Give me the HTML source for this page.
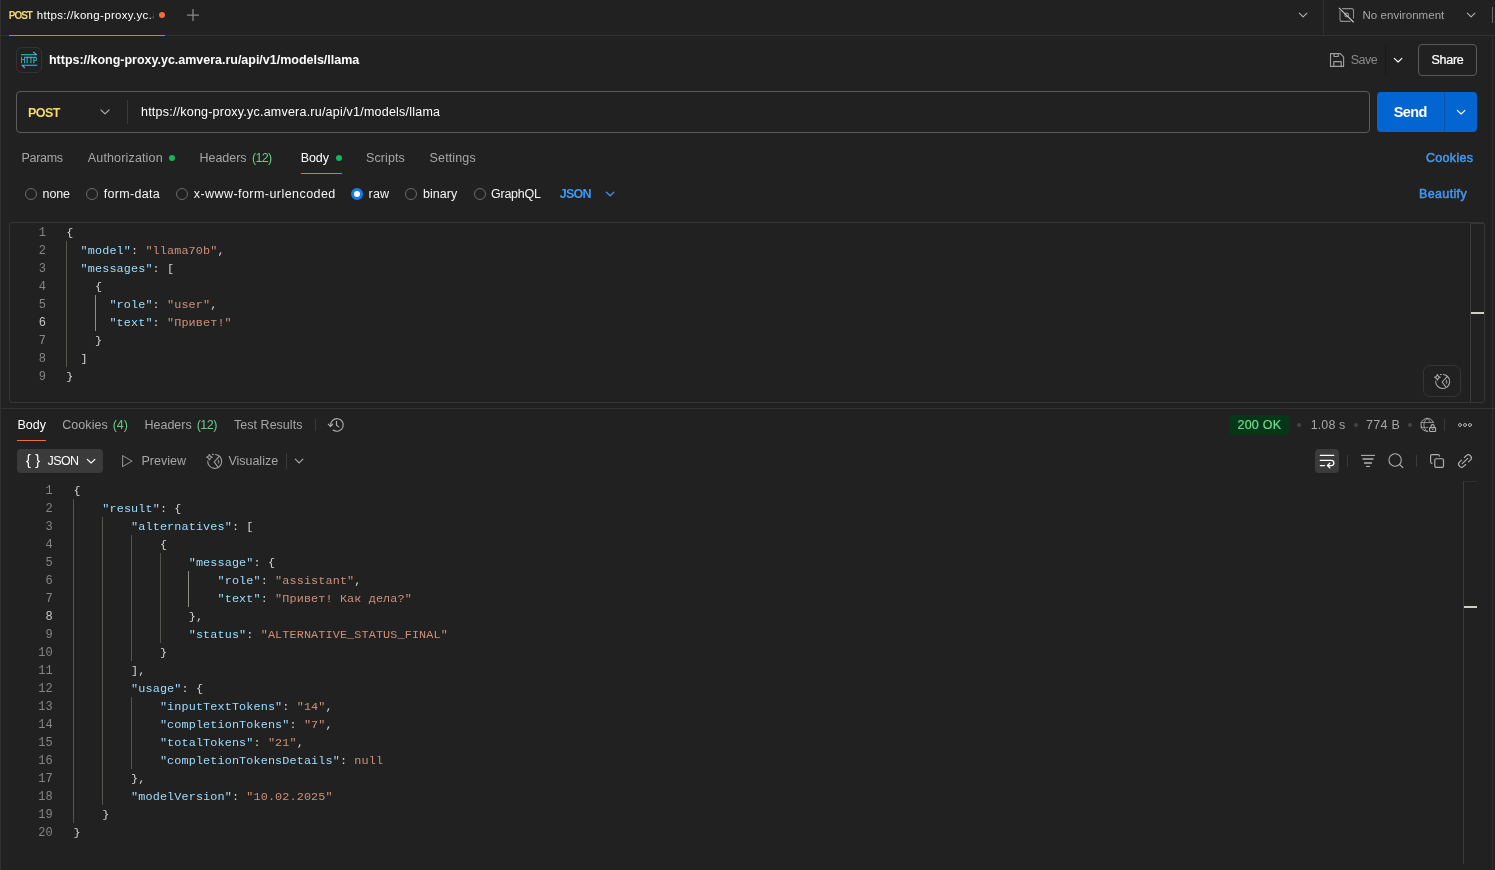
<!DOCTYPE html>
<html lang="en"><head><meta charset="utf-8"><title>Postman</title>
<style>
html,body{margin:0;padding:0;background:#212121;}
#app{position:relative;width:1495px;height:870px;overflow:hidden;background:#212121;font-family:'Liberation Sans',sans-serif;}
#app span{position:absolute;white-space:pre;line-height:16px;height:16px;}
#app .b{position:absolute;box-sizing:border-box;}
#app svg{position:absolute;overflow:visible;}
.ln,.cl{position:absolute;height:18px;line-height:18px;font-family:'Liberation Mono',monospace;font-size:12px;white-space:pre;}
.cl{font-size:11.8px;letter-spacing:0.12px;}
.ln{text-align:right;color:#858585;}
.ln.a{color:#c6c6c6;}
.cl i{font-style:normal;}
.k{color:#9cdcfe}.s{color:#ce9178}.p{color:#d4d4d4}
.g{position:absolute;width:1px;}
.tabtitle{-webkit-mask-image:linear-gradient(90deg,#000 0,#000 113px,transparent 117.5px);mask-image:linear-gradient(90deg,#000 0,#000 113px,transparent 117.5px);}
#txt{position:absolute;left:0;top:0;width:1495px;height:870px;will-change:transform;}

</style></head>
<body>
<div id="app">
<!-- left strip / right strip -->
<div class="b" style="left:0;top:0;width:1px;height:870px;background:#303030"></div>
<div class="b" style="left:1492px;top:36px;width:1px;height:834px;background:#2e2e2e"></div>
<!-- tab bar -->
<div class="b" style="left:1px;top:35px;width:1494px;height:1px;background:#303030"></div>
<div class="b" style="left:9px;top:35px;width:156px;height:1px;background:#f26b3a"></div>
<div class="b" style="left:158.7px;top:11.7px;width:6.6px;height:6.6px;border-radius:50%;background:#f26b3a"></div>
<div class="b" style="left:1323px;top:0;width:1px;height:35px;background:#303030"></div>
<div class="b" style="left:1492px;top:7px;width:1px;height:16px;background:#6b6b6b"></div>
<!-- title row -->
<div class="b" style="left:16px;top:47px;width:26px;height:26px;border:1px solid #333;border-radius:6px"></div>
<div class="b" style="left:1385px;top:44px;width:1px;height:32px;background:#1a1a1a"></div>
<div class="b" style="left:1418px;top:44px;width:59px;height:32px;border:1px solid #5a5a5a;border-radius:4px"></div>
<!-- url row -->
<div class="b" style="left:16px;top:91px;width:1354px;height:42px;border:1px solid #5c5c5c;border-radius:4px"></div>
<div class="b" style="left:127px;top:100px;width:1px;height:24px;background:#3a3a3a"></div>
<div class="b" style="left:1377px;top:92px;width:100px;height:40px;border-radius:4px;background:#0265d2"></div>
<div class="b" style="left:1444px;top:92px;width:1px;height:40px;background:#0552a8"></div>
<!-- request tabs -->
<div class="b" style="left:169px;top:155px;width:6px;height:6px;border-radius:50%;background:#12b851"></div>
<div class="b" style="left:336px;top:155px;width:6px;height:6px;border-radius:50%;background:#12b851"></div>
<div class="b" style="left:301px;top:173px;width:41px;height:1px;background:#f26b3a"></div>
<!-- radios -->
<div class="b" style="left:25px;top:188px;width:12px;height:12px;border:1px solid #6b6b6b;border-radius:50%"></div>
<div class="b" style="left:86px;top:188px;width:12px;height:12px;border:1px solid #6b6b6b;border-radius:50%"></div>
<div class="b" style="left:176px;top:188px;width:12px;height:12px;border:1px solid #6b6b6b;border-radius:50%"></div>
<div class="b" style="left:351px;top:188px;width:12px;height:12px;border:3.5px solid #0f7df0;border-radius:50%;background:#fff"></div>
<div class="b" style="left:405px;top:188px;width:12px;height:12px;border:1px solid #6b6b6b;border-radius:50%"></div>
<div class="b" style="left:474px;top:188px;width:12px;height:12px;border:1px solid #6b6b6b;border-radius:50%"></div>
<!-- request editor -->
<div class="b" style="left:9px;top:222px;width:1476px;height:181px;border:1px solid #353535;border-radius:3px"></div>
<div class="b" style="left:1470px;top:223px;width:1px;height:179px;background:#3c3c3c"></div>
<div class="b" style="left:1471px;top:223px;width:13px;height:1px;background:#353535"></div>
<div class="b" style="left:1471px;top:312px;width:13px;height:2px;background:#cfcfc4"></div>
<div class="b" style="left:1423px;top:365px;width:38px;height:32px;border:1px solid #353535;border-radius:7px"></div>
<!-- pane separator -->
<div class="b" style="left:1px;top:408px;width:1494px;height:1px;background:#333333"></div>
<!-- response tabs -->
<div class="b" style="left:17px;top:440px;width:29px;height:1px;background:#f26b3a"></div>
<div class="b" style="left:315px;top:419px;width:1px;height:12px;background:#3a3a3a"></div>
<div class="b" style="left:1229px;top:415px;width:60px;height:20px;border-radius:4px;background:#053618"></div>
<div class="b" style="left:1297px;top:423px;width:4px;height:4px;border-radius:50%;background:#454545"></div>
<div class="b" style="left:1354px;top:423px;width:4px;height:4px;border-radius:50%;background:#454545"></div>
<div class="b" style="left:1408px;top:423px;width:4px;height:4px;border-radius:50%;background:#454545"></div>
<div class="b" style="left:1444px;top:419px;width:1px;height:12px;background:#3a3a3a"></div>
<!-- response toolbar -->
<div class="b" style="left:17px;top:449px;width:86px;height:24px;border-radius:4px;background:#3b3b3b"></div>
<div class="b" style="left:286px;top:453px;width:1px;height:16px;background:#3a3a3a"></div>
<div class="b" style="left:1315px;top:449px;width:24px;height:24px;border-radius:4px;background:#3b3b3b"></div>
<div class="b" style="left:1347px;top:455px;width:1px;height:12px;background:#3a3a3a"></div>
<div class="b" style="left:1416px;top:455px;width:1px;height:12px;background:#3a3a3a"></div>
<!-- response overview ruler -->
<div class="b" style="left:1463px;top:481px;width:14px;height:383px;border-left:1px solid #3a3a3a;border-top:1px solid #2f2f2f"></div>
<div class="b" style="left:1464px;top:606px;width:13px;height:2px;background:#cfcfc4"></div>

<div id="txt">
<span style="left:8.7px;top:7.54px;font-size:10px;font-weight:700;color:#f5d971;letter-spacing:-0.978px">POST</span>
<span class="tabtitle" style="left:36.8px;top:7.02px;font-size:11.5px;font-weight:400;color:#ffffff;letter-spacing:0.316px">https://kong-proxy.yc.a</span>
<span style="left:1362.5px;top:7.02px;font-size:11.5px;font-weight:400;color:#a6a6a6;letter-spacing:0.047px">No environment</span>
<span style="left:49.0px;top:51.67px;font-size:12.5px;font-weight:700;color:#ffffff;letter-spacing:-0.016px">https://kong-proxy.yc.amvera.ru/api/v1/models/llama</span>
<span style="left:1350.7px;top:51.67px;font-size:12.5px;font-weight:400;color:#8a8a8a;letter-spacing:-0.467px">Save</span>
<span style="left:1431.4px;top:51.67px;font-size:12.5px;font-weight:400;color:#ffffff;-webkit-text-stroke:0.22px #ffffff;letter-spacing:-0.240px">Share</span>
<span style="left:28.0px;top:104.67px;font-size:12.5px;font-weight:700;color:#f5d971;letter-spacing:-0.582px">POST</span>
<span style="left:141.0px;top:103.67px;font-size:12.5px;font-weight:400;color:#ffffff;letter-spacing:0.218px">https://kong-proxy.yc.amvera.ru/api/v1/models/llama</span>
<span style="left:1393.7px;top:103.68px;font-size:14.5px;font-weight:700;color:#ffffff;letter-spacing:-0.584px">Send</span>
<span style="left:21.4px;top:149.67px;font-size:12.5px;font-weight:400;color:#a6a6a6;letter-spacing:-0.276px">Params</span>
<span style="left:87.8px;top:149.67px;font-size:12.5px;font-weight:400;color:#a6a6a6;letter-spacing:0.153px">Authorization</span>
<span style="left:199.6px;top:149.67px;font-size:12.5px;font-weight:400;color:#a6a6a6;letter-spacing:-0.058px">Headers</span>
<span style="left:251.9px;top:149.67px;font-size:12.5px;font-weight:400;color:#6bc98a;letter-spacing:-0.678px">(12)</span>
<span style="left:300.7px;top:149.67px;font-size:12.5px;font-weight:400;color:#ffffff;letter-spacing:-0.100px">Body</span>
<span style="left:366.1px;top:149.67px;font-size:12.5px;font-weight:400;color:#a6a6a6;letter-spacing:0.066px">Scripts</span>
<span style="left:429.6px;top:149.67px;font-size:12.5px;font-weight:400;color:#a6a6a6;letter-spacing:0.133px">Settings</span>
<span style="left:1426.0px;top:149.67px;font-size:12.5px;font-weight:400;color:#4896ec;-webkit-text-stroke:0.5px #4896ec;letter-spacing:0.305px">Cookies</span>
<span style="left:42.6px;top:185.67px;font-size:12.5px;font-weight:400;color:#f5f5f5;letter-spacing:-0.138px">none</span>
<span style="left:103.7px;top:185.67px;font-size:12.5px;font-weight:400;color:#f5f5f5;letter-spacing:0.325px">form-data</span>
<span style="left:193.7px;top:185.67px;font-size:12.5px;font-weight:400;color:#f5f5f5;letter-spacing:0.446px">x-www-form-urlencoded</span>
<span style="left:368.6px;top:185.67px;font-size:12.5px;font-weight:400;color:#f5f5f5;letter-spacing:0.172px">raw</span>
<span style="left:422.9px;top:185.67px;font-size:12.5px;font-weight:400;color:#f5f5f5;letter-spacing:0.071px">binary</span>
<span style="left:491.1px;top:185.67px;font-size:12.5px;font-weight:400;color:#f5f5f5;letter-spacing:-0.270px">GraphQL</span>
<span style="left:559.7px;top:185.67px;font-size:12.5px;font-weight:700;color:#3d97f5;letter-spacing:-0.749px">JSON</span>
<span style="left:1419.0px;top:185.67px;font-size:12.5px;font-weight:400;color:#4896ec;-webkit-text-stroke:0.5px #4896ec;letter-spacing:0.361px">Beautify</span>
<span style="left:17.4px;top:416.67px;font-size:12.5px;font-weight:400;color:#ffffff;letter-spacing:0.000px">Body</span>
<span style="left:62.2px;top:416.67px;font-size:12.5px;font-weight:400;color:#a6a6a6;letter-spacing:0.071px">Cookies</span>
<span style="left:112.7px;top:416.67px;font-size:12.5px;font-weight:400;color:#6bc98a;letter-spacing:-0.041px">(4)</span>
<span style="left:144.5px;top:416.67px;font-size:12.5px;font-weight:400;color:#a6a6a6;letter-spacing:-0.008px">Headers</span>
<span style="left:196.7px;top:416.67px;font-size:12.5px;font-weight:400;color:#6bc98a;letter-spacing:-0.478px">(12)</span>
<span style="left:234.1px;top:416.67px;font-size:12.5px;font-weight:400;color:#a6a6a6;letter-spacing:0.019px">Test Results</span>
<span style="left:1237.5px;top:416.67px;font-size:12.5px;font-weight:400;color:#6fdc8c;-webkit-text-stroke:0.22px #6fdc8c;letter-spacing:0.222px">200 OK</span>
<span style="left:1310.8px;top:416.67px;font-size:12.5px;font-weight:400;color:#a6a6a6;letter-spacing:0.068px">1.08 s</span>
<span style="left:1366.0px;top:416.67px;font-size:12.5px;font-weight:400;color:#a6a6a6;letter-spacing:0.282px">774 B</span>
<span style="left:26.0px;top:451.98px;font-size:14.5px;font-weight:400;color:#ffffff;letter-spacing:0.141px">{ }</span>
<span style="left:47.5px;top:452.67px;font-size:12.5px;font-weight:400;color:#ffffff;letter-spacing:-0.581px">JSON</span>
<span style="left:141.5px;top:452.67px;font-size:12.5px;font-weight:400;color:#a6a6a6;letter-spacing:0.022px">Preview</span>
<span style="left:228.4px;top:452.67px;font-size:12.5px;font-weight:400;color:#a6a6a6;letter-spacing:-0.014px">Visualize</span>
<div class="g" style="left:66px;top:241px;height:126px;background:#55534c"></div>
<div class="g" style="left:95px;top:295px;height:36px;background:#8f8d85"></div>
<div class="ln" style="top:224px;left:0;width:46px">1</div>
<div class="cl" style="top:224px;left:66.2px"><i class="p">{</i></div>
<div class="ln" style="top:242px;left:0;width:46px">2</div>
<div class="cl" style="top:242px;left:66.2px">  <i class="k">&quot;model&quot;</i><i class="p">: </i><i class="s">&quot;llama70b&quot;</i><i class="p">,</i></div>
<div class="ln" style="top:260px;left:0;width:46px">3</div>
<div class="cl" style="top:260px;left:66.2px">  <i class="k">&quot;messages&quot;</i><i class="p">: </i><i class="p">[</i></div>
<div class="ln" style="top:278px;left:0;width:46px">4</div>
<div class="cl" style="top:278px;left:66.2px">    <i class="p">{</i></div>
<div class="ln" style="top:296px;left:0;width:46px">5</div>
<div class="cl" style="top:296px;left:66.2px">      <i class="k">&quot;role&quot;</i><i class="p">: </i><i class="s">&quot;user&quot;</i><i class="p">,</i></div>
<div class="ln a" style="top:314px;left:0;width:46px">6</div>
<div class="cl" style="top:314px;left:66.2px">      <i class="k">&quot;text&quot;</i><i class="p">: </i><i class="s">&quot;Привет!&quot;</i></div>
<div class="ln" style="top:332px;left:0;width:46px">7</div>
<div class="cl" style="top:332px;left:66.2px">    <i class="p">}</i></div>
<div class="ln" style="top:350px;left:0;width:46px">8</div>
<div class="cl" style="top:350px;left:66.2px">  <i class="p">]</i></div>
<div class="ln" style="top:368px;left:0;width:46px">9</div>
<div class="cl" style="top:368px;left:66.2px"><i class="p">}</i></div>
<div class="g" style="left:73px;top:499px;height:324px;background:#55534c"></div>
<div class="g" style="left:102px;top:517px;height:288px;background:#55534c"></div>
<div class="g" style="left:131px;top:535px;height:126px;background:#55534c"></div>
<div class="g" style="left:160px;top:553px;height:90px;background:#55534c"></div>
<div class="g" style="left:188px;top:571px;height:36px;background:#8f8d85"></div>
<div class="g" style="left:131px;top:697px;height:72px;background:#55534c"></div>
<div class="ln" style="top:482px;left:0;width:52.6px">1</div>
<div class="cl" style="top:482px;left:73.5px"><i class="p">{</i></div>
<div class="ln" style="top:500px;left:0;width:52.6px">2</div>
<div class="cl" style="top:500px;left:73.5px">    <i class="k">&quot;result&quot;</i><i class="p">: </i><i class="p">{</i></div>
<div class="ln" style="top:518px;left:0;width:52.6px">3</div>
<div class="cl" style="top:518px;left:73.5px">        <i class="k">&quot;alternatives&quot;</i><i class="p">: </i><i class="p">[</i></div>
<div class="ln" style="top:536px;left:0;width:52.6px">4</div>
<div class="cl" style="top:536px;left:73.5px">            <i class="p">{</i></div>
<div class="ln" style="top:554px;left:0;width:52.6px">5</div>
<div class="cl" style="top:554px;left:73.5px">                <i class="k">&quot;message&quot;</i><i class="p">: </i><i class="p">{</i></div>
<div class="ln" style="top:572px;left:0;width:52.6px">6</div>
<div class="cl" style="top:572px;left:73.5px">                    <i class="k">&quot;role&quot;</i><i class="p">: </i><i class="s">&quot;assistant&quot;</i><i class="p">,</i></div>
<div class="ln" style="top:590px;left:0;width:52.6px">7</div>
<div class="cl" style="top:590px;left:73.5px">                    <i class="k">&quot;text&quot;</i><i class="p">: </i><i class="s">&quot;Привет! Как дела?&quot;</i></div>
<div class="ln a" style="top:608px;left:0;width:52.6px">8</div>
<div class="cl" style="top:608px;left:73.5px">                <i class="p">},</i></div>
<div class="ln" style="top:626px;left:0;width:52.6px">9</div>
<div class="cl" style="top:626px;left:73.5px">                <i class="k">&quot;status&quot;</i><i class="p">: </i><i class="s">&quot;ALTERNATIVE_STATUS_FINAL&quot;</i></div>
<div class="ln" style="top:644px;left:0;width:52.6px">10</div>
<div class="cl" style="top:644px;left:73.5px">            <i class="p">}</i></div>
<div class="ln" style="top:662px;left:0;width:52.6px">11</div>
<div class="cl" style="top:662px;left:73.5px">        <i class="p">],</i></div>
<div class="ln" style="top:680px;left:0;width:52.6px">12</div>
<div class="cl" style="top:680px;left:73.5px">        <i class="k">&quot;usage&quot;</i><i class="p">: </i><i class="p">{</i></div>
<div class="ln" style="top:698px;left:0;width:52.6px">13</div>
<div class="cl" style="top:698px;left:73.5px">            <i class="k">&quot;inputTextTokens&quot;</i><i class="p">: </i><i class="s">&quot;14&quot;</i><i class="p">,</i></div>
<div class="ln" style="top:716px;left:0;width:52.6px">14</div>
<div class="cl" style="top:716px;left:73.5px">            <i class="k">&quot;completionTokens&quot;</i><i class="p">: </i><i class="s">&quot;7&quot;</i><i class="p">,</i></div>
<div class="ln" style="top:734px;left:0;width:52.6px">15</div>
<div class="cl" style="top:734px;left:73.5px">            <i class="k">&quot;totalTokens&quot;</i><i class="p">: </i><i class="s">&quot;21&quot;</i><i class="p">,</i></div>
<div class="ln" style="top:752px;left:0;width:52.6px">16</div>
<div class="cl" style="top:752px;left:73.5px">            <i class="k">&quot;completionTokensDetails&quot;</i><i class="p">: </i><i class="s">null</i></div>
<div class="ln" style="top:770px;left:0;width:52.6px">17</div>
<div class="cl" style="top:770px;left:73.5px">        <i class="p">},</i></div>
<div class="ln" style="top:788px;left:0;width:52.6px">18</div>
<div class="cl" style="top:788px;left:73.5px">        <i class="k">&quot;modelVersion&quot;</i><i class="p">: </i><i class="s">&quot;10.02.2025&quot;</i></div>
<div class="ln" style="top:806px;left:0;width:52.6px">19</div>
<div class="cl" style="top:806px;left:73.5px">    <i class="p">}</i></div>
<div class="ln" style="top:824px;left:0;width:52.6px">20</div>
<div class="cl" style="top:824px;left:73.5px"><i class="p">}</i></div>
</div>
<!-- chevrons -->
<svg style="left:0;top:0" width="1495" height="870" viewBox="0 0 1495 870" fill="none" stroke-linecap="round" stroke-linejoin="round">
<g stroke="#b0b0b0" stroke-width="1.1">
<path d="M1299.3 13.2l3.8 3.7l3.8-3.7"/>
<path d="M1467.3 13.2l3.8 3.7l3.8-3.7"/>
<path d="M101 110l4 3.8l4-3.8"/>
<path d="M295.3 459.2l3.8 3.7l3.8-3.7"/>
</g>
<g stroke="#ffffff" stroke-width="1.15">
<path d="M1394.3 58.3l3.8 3.7l3.8-3.7"/>
<path d="M1457.3 110.3l3.8 3.7l3.8-3.7"/>
<path d="M87.3 459.3l3.8 3.7l3.8-3.7"/>
</g>
<path d="M606.3 192.1l3.8 3.7l3.8-3.7" stroke="#3d97f5" stroke-width="1.3"/>
<!-- plus -->
<path d="M187 15.05h12M193 9.05v12" stroke="#8a8a8a" stroke-width="1.25" stroke-linecap="butt"/>
<!-- http icon -->
<g stroke="#3cc1d5" stroke-width="1.1" stroke-linecap="butt" stroke-linejoin="miter">
<path d="M21 54.7h16M33.3 52l3.2 2.7"/>
<path d="M21.5 65.2h15.7M25 68l-3.2-2.8"/>
</g>
<text x="20.7" y="63" font-family="'Liberation Sans', sans-serif" font-size="8.4" fill="#3cc1d5" stroke="#3cc1d5" stroke-width="0.3" textLength="16.4" lengthAdjust="spacingAndGlyphs">HTTP</text>
<!-- env icon -->
<g stroke="#8e8e8e" stroke-width="1.1">
<path d="M1342.5 8.6h9a2 2 0 0 1 2 2v7.5M1350 21.4h-8a2 2 0 0 1-2-2v-8.5"/>
<circle cx="1346.7" cy="15" r="1.9"/>
</g>
<path d="M1339.2 8.2l14.2 13.8" stroke="#c8c8c8" stroke-width="1.1"/>
<!-- save icon -->
<g stroke="#a0a0a0" stroke-width="1.1" stroke-linejoin="round">
<path d="M1330.5 53.6h9.8l3.3 3.3v9.5h-13.1z"/>
<path d="M1334 53.6v2.9h4.2v-2.9"/>
<path d="M1333.8 66.4v-4.8h7.4v4.8"/>
</g>
<!-- AI viz icon (editor) -->
<g id="viz" stroke="#b0b0b0" stroke-width="1.05" transform="translate(1442.7 381.5)">
<path d="M-6.98-0.4a7 7 0 1 0 7.7-6.56"/>
<path d="M4.7-5.2l-5.2 5.7l3.6 5"/>
<path d="M3.85-0.9c-0.45 0.9-0.45 2 0 2.9c0.45-0.9 0.45-2 0-2.9z" stroke-width="0.7"/>
<path d="M-5.3-7l0.9 1.9l1.9 0.9l-1.9 0.9l-0.9 1.9l-0.9-1.9l-1.9-0.9l1.9-0.9z"/>
<path d="M-2.3-7h0.9" stroke-width="1.1"/>
</g>
<g stroke="#a0a0a0" stroke-width="1.05" transform="translate(214.7 461.4)">
<path d="M-6.98-0.4a7 7 0 1 0 7.7-6.56"/>
<path d="M4.7-5.2l-5.2 5.7l3.6 5"/>
<path d="M3.85-0.9c-0.45 0.9-0.45 2 0 2.9c0.45-0.9 0.45-2 0-2.9z" stroke-width="0.7"/>
<path d="M-5.3-7l0.9 1.9l1.9 0.9l-1.9 0.9l-0.9 1.9l-0.9-1.9l-1.9-0.9l1.9-0.9z"/>
<path d="M-2.3-7h0.9" stroke-width="1.1"/>
</g>
<!-- play icon -->
<path d="M122.6 455.6v11l9.4-5.5z" stroke="#8e8e8e" stroke-width="1.1"/>
<!-- history icon -->
<g stroke="#b0b0b0" stroke-width="1.15">
<path d="M333.2 430A6.3 6.3 0 1 0 330.7 425.6"/>
<path d="M328.3 424.2L330.5 426.7L332.7 424.1"/>
<path d="M336.5 421.2V425.2L338.8 426.9"/>
</g>
<!-- globe lock -->
<g stroke="#b0b0b0" stroke-width="0.9">
<path d="M1427.8 431.4a6.5 6.5 0 1 1 5.7-8.9" stroke-width="1"/>
<path d="M1427 418.4c-4.2 3.2-4.2 9.8 0 13M1427 418.4c1.7 1.2 2.8 2.6 3.2 4.1" stroke-width="0.8"/>
<path d="M1420.8 422.5h12.6M1420.8 427.4h7" stroke-width="0.7"/>
<rect x="1429.6" y="427.6" width="6" height="3.9" rx="0.7" stroke-width="1.1"/>
<path d="M1431.1 427.6v-1.4a1.55 1.55 0 0 1 3.1 0v1.4" stroke-width="1.1"/>
<path d="M1432.3 429.6h0.6" stroke-width="1"/>
</g>
<!-- more -->
<g stroke="#b0b0b0" stroke-width="1">
<circle cx="1460" cy="425" r="1.5"/><circle cx="1465" cy="425" r="1.5"/><circle cx="1470" cy="425" r="1.5"/>
</g>
<!-- wrap icon -->
<g stroke="#ffffff" stroke-width="1.25">
<path d="M1320.3 455.4h13.4M1320.3 460.4h11a2.55 2.55 0 0 1 0 5.1h-3.4"/>
<path d="M1320.3 465.5h4.2M1329.8 463.2l-2.4 2.3l2.4 2.3"/>
</g>
<!-- filter -->
<g stroke="#8e8e8e" stroke-linecap="butt">
<path d="M1361 455.4h14" stroke="#b0b0b0" stroke-width="1.1"/>
<path d="M1362.5 459h11" stroke-width="2"/>
<path d="M1364 463h8" stroke-width="2"/>
<path d="M1366 466.4h4" stroke="#b0b0b0" stroke-width="1.1"/>
</g>
<!-- search -->
<g stroke="#b0b0b0" stroke-width="1.1">
<circle cx="1395.1" cy="460" r="6.2"/>
<path d="M1399.6 464.5l3.3 3.2"/>
</g>
<!-- copy -->
<g stroke="#b0b0b0" stroke-width="1.15">
<rect x="1434.8" y="458.7" width="8.7" height="8.7" rx="1.4"/>
<path d="M1432 463.3h-0.2a1.2 1.2 0 0 1-1.2-1.2v-6.3a1.2 1.2 0 0 1 1.2-1.2h6.3a1.2 1.2 0 0 1 1.2 1.2v0.3"/>
</g>
<!-- link -->
<g stroke="#b0b0b0" stroke-width="1.15" transform="rotate(-43 1465 461)">
<path d="M1463.1 458h-2.7a3 3 0 0 0 0 6h2.7M1466.9 458h2.7a3 3 0 0 1 0 6h-2.7"/>
<path d="M1461.2 461h7.6"/>
</g>
</svg>

</div>
</body></html>
